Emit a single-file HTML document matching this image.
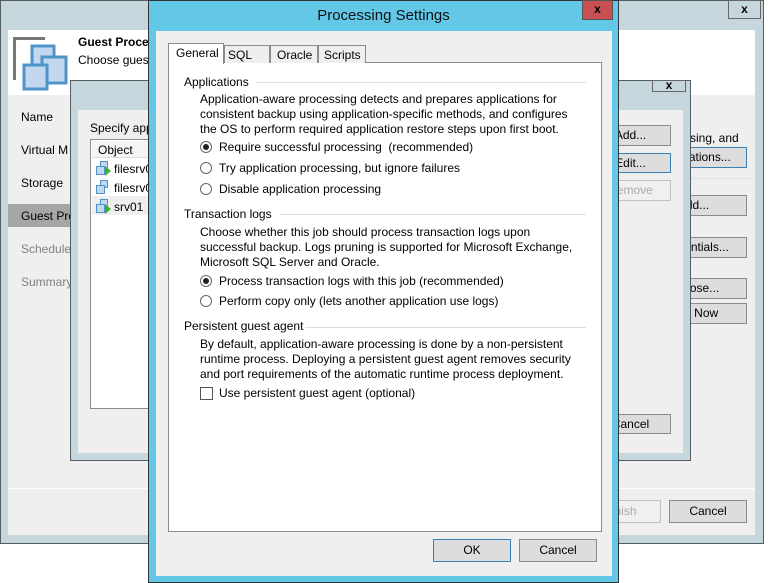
<!DOCTYPE html>
<html><head><meta charset="utf-8"><style>
*{box-sizing:border-box;margin:0;padding:0}
body{width:768px;height:583px;background:#fff;position:relative;overflow:hidden;font-family:"Liberation Sans",sans-serif;font-size:12px;color:#000}
.a{position:absolute}
.btn{position:absolute;background:#dddddd;border:1px solid #8a8a8a;text-align:center;line-height:18px;font-size:12px}
.t{position:absolute;white-space:nowrap;font-size:12px}
.rad{position:absolute;width:12px;height:12px;border:1px solid #666;border-radius:50%;background:#fff}
.rad.on::after{content:"";position:absolute;left:2px;top:2px;width:6px;height:6px;border-radius:50%;background:#222}
.sep{position:absolute;height:1px;background:#d5e0e6}
</style></head><body>
<!-- back window -->
<div class="a" style="left:0;top:0;width:764px;height:544px;background:#c5d7dc;border:1px solid #555b62"></div>
<div class="btn" style="left:728px;top:0;width:33px;height:19px;background:#c5d7dc;border-color:#666;font-weight:bold;line-height:17px">x</div>
<div class="a" style="left:8px;top:30px;width:747px;height:505px;background:#efefef"></div>
<div class="a" style="left:8px;top:30px;width:747px;height:65px;background:#fff"></div>
<svg class="a" style="left:0;top:0" width="80" height="100"><path d="M14.5 80V38.5H45" fill="none" stroke="#777" stroke-width="3"/><rect x="32" y="46" width="22" height="25" fill="#c3d7ef" stroke="#4e94c8" stroke-width="3"/><rect x="42" y="57" width="24" height="26" fill="#c3d7ef" stroke="#4e94c8" stroke-width="3"/><rect x="24" y="65" width="23" height="24" fill="#c3d7ef" stroke="#4e94c8" stroke-width="3"/></svg>
<div class="t" style="left:78px;top:35px;font-weight:bold">Guest Processing</div>
<div class="t" style="left:78px;top:53px">Choose guest</div>
<div class="t" style="left:21px;top:110px">Name</div>
<div class="t" style="left:21px;top:143px">Virtual M</div>
<div class="t" style="left:21px;top:176px">Storage</div>
<div class="a" style="left:8px;top:204px;width:70px;height:23px;background:#a6a6a6"></div>
<div class="t" style="left:21px;top:209px">Guest Pro</div>
<div class="t" style="left:21px;top:242px;color:#808080">Schedule</div>
<div class="t" style="left:21px;top:275px;color:#808080">Summary</div>
<div class="t" style="left:690px;top:131px">sing, and</div>
<div class="btn" style="left:640px;top:147px;width:107px;height:21px;border-color:#3c7fb1">Applications...</div>
<div class="sep" style="left:690px;top:178px;width:65px;background:#d8e3e8"></div>
<div class="btn" style="left:640px;top:195px;width:107px;height:21px">Add...</div>
<div class="btn" style="left:640px;top:237px;width:107px;height:21px">Credentials...</div>
<div class="btn" style="left:640px;top:278px;width:107px;height:21px">Choose...</div>
<div class="btn" style="left:640px;top:303px;width:107px;height:21px">Test Now</div>
<div class="a" style="left:8px;top:488px;width:747px;height:1px;background:#fff"></div>
<div class="btn" style="left:580px;top:500px;width:81px;height:23px;background:#f0f0f0;border-color:#c0c0c0;color:#aaa;line-height:21px">Finish</div>
<div class="btn" style="left:669px;top:500px;width:78px;height:23px;line-height:21px">Cancel</div>
<!-- mid window -->
<div class="a" style="left:70px;top:80px;width:621px;height:381px;background:#c5d7dc;border:1px solid #555b62"></div>
<div class="btn" style="left:652px;top:80px;width:34px;height:12px;background:#c5d7dc;border-color:#666;font-weight:bold;line-height:9px">x</div>
<div class="a" style="left:78px;top:110px;width:605px;height:343px;background:#efefef"></div>
<div class="t" style="left:90px;top:121px">Specify application</div>
<div class="a" style="left:90px;top:139px;width:100px;height:270px;background:#fff;border:1px solid #8a8a94"></div>
<div class="a" style="left:92px;top:141px;width:96px;height:17px;background:#f4f4f4;border-bottom:1px solid #ddd"></div>
<div class="t" style="left:98px;top:143px">Object</div>
<div class="a" style="left:92px;top:196px;width:96px;height:19px;background:#eeeeee"></div>
<div class="t" style="left:114px;top:162px">filesrv01</div>
<div class="t" style="left:114px;top:181px">filesrv02</div>
<div class="t" style="left:114px;top:200px">srv01</div>
<svg class="a" style="left:95px;top:160px" width="18" height="60"><g fill="#c3d7ef" stroke="#4e94c8"><rect x="5.5" y="1.5" width="7" height="7"/><rect x="1.5" y="6.5" width="8" height="8"/><rect x="5.5" y="20.5" width="7" height="7"/><rect x="1.5" y="25.5" width="8" height="8"/><rect x="5.5" y="39.5" width="7" height="7"/><rect x="1.5" y="44.5" width="8" height="8"/></g><path d="M10 6l6 5-6 5zM10 44l6 5-6 5z" fill="#3cb030"/></svg>
<div class="btn" style="left:590px;top:125px;width:81px;height:21px">Add...</div>
<div class="btn" style="left:590px;top:153px;width:81px;height:20px;border-color:#3c7fb1">Edit...</div>
<div class="btn" style="left:590px;top:180px;width:81px;height:21px;background:#f0f0f0;border-color:#c0c0c0;color:#aaa">Remove</div>
<div class="btn" style="left:590px;top:414px;width:81px;height:20px">Cancel</div>
<!-- front dialog -->
<div class="a" style="left:148px;top:0;width:471px;height:583px;background:#63c8e8;border:1px solid #333"></div>
<div class="t" style="left:148px;top:7px;width:471px;text-align:center;font-size:15px;color:#111">Processing Settings</div>
<div class="btn" style="left:582px;top:0;width:31px;height:20px;background:#c75050;border-color:#555;font-weight:bold;line-height:17px">x</div>
<div class="a" style="left:156px;top:31px;width:456px;height:545px;background:#efefef"></div>
<div class="a" style="left:168px;top:62px;width:434px;height:470px;background:#fff;border:1px solid #8a8a94"></div>
<div class="a" style="left:224px;top:45px;width:46px;height:18px;background:#efefef;border:1px solid #8a8a94;border-bottom:none"></div>
<div class="a" style="left:270px;top:45px;width:48px;height:18px;background:#efefef;border:1px solid #8a8a94;border-bottom:none"></div>
<div class="a" style="left:318px;top:45px;width:48px;height:18px;background:#efefef;border:1px solid #8a8a94;border-bottom:none"></div>
<div class="a" style="left:168px;top:43px;width:56px;height:21px;background:#fff;border:1px solid #8a8a94;border-bottom:none"></div>
<div class="t" style="left:176px;top:46px">General</div>
<div class="t" style="left:228px;top:48px">SQL</div>
<div class="t" style="left:277px;top:48px">Oracle</div>
<div class="t" style="left:324px;top:48px">Scripts</div>

<div class="t" style="left:184px;top:75px">Applications</div><div class="sep" style="left:256px;top:82px;width:330px"></div>
<div class="t" style="left:200px;top:92px">Application-aware processing detects and prepares applications for</div>
<div class="t" style="left:200px;top:107px">consistent backup using application-specific methods, and configures</div>
<div class="t" style="left:200px;top:122px">the OS to perform required application restore steps upon first boot.</div>
<div class="rad on" style="left:200px;top:141px"></div><div class="t" style="left:219px;top:140px">Require successful processing &nbsp;(recommended)</div>
<div class="rad" style="left:200px;top:162px"></div><div class="t" style="left:219px;top:161px">Try application processing, but ignore failures</div>
<div class="rad" style="left:200px;top:183px"></div><div class="t" style="left:219px;top:182px">Disable application processing</div>

<div class="t" style="left:184px;top:207px">Transaction logs</div><div class="sep" style="left:280px;top:214px;width:306px"></div>
<div class="t" style="left:200px;top:225px">Choose whether this job should process transaction logs upon</div>
<div class="t" style="left:200px;top:240px">successful backup. Logs pruning is supported for Microsoft Exchange,</div>
<div class="t" style="left:200px;top:255px">Microsoft SQL Server and Oracle.</div>
<div class="rad on" style="left:200px;top:275px"></div><div class="t" style="left:219px;top:274px">Process transaction logs with this job (recommended)</div>
<div class="rad" style="left:200px;top:295px"></div><div class="t" style="left:219px;top:294px">Perform copy only (lets another application use logs)</div>

<div class="t" style="left:184px;top:319px">Persistent guest agent</div><div class="sep" style="left:305px;top:327px;width:281px"></div>
<div class="t" style="left:200px;top:337px">By default, application-aware processing is done by a non-persistent</div>
<div class="t" style="left:200px;top:352px">runtime process. Deploying a persistent guest agent removes security</div>
<div class="t" style="left:200px;top:367px">and port requirements of the automatic runtime process deployment.</div>
<div class="a" style="left:200px;top:387px;width:13px;height:13px;border:1px solid #555;background:#fff"></div>
<div class="t" style="left:219px;top:386px">Use persistent guest agent (optional)</div>

<div class="btn" style="left:433px;top:539px;width:78px;height:23px;border-color:#3c7fb1;line-height:21px">OK</div>
<div class="btn" style="left:519px;top:539px;width:78px;height:23px;line-height:21px">Cancel</div>
</body></html>
